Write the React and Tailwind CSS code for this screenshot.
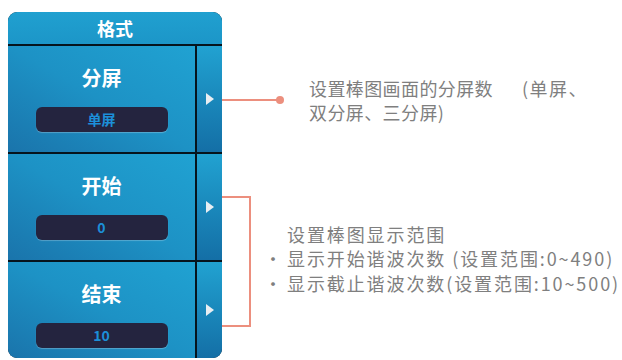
const font = { fontFamily: '"Noto Sans CJK SC", "Noto Sans", sans-serif' };

const Row = ({ title, value, className }) => (
  <div className={`grid grid-cols-[187px_25px] gap-x-[2px] ${className}`}>
    <div className="flex flex-col items-center bg-gradient-to-tr from-[#1a74ab] via-[#1d92c5] to-[#20a2d2]">
      <div className="mt-[19px] h-[26px] text-[20px] font-bold leading-[26px] text-white">{title}</div>
      <div className="mt-[16px] flex h-[25px] w-[132px] items-center justify-center rounded-[6px] bg-[#24243f] text-[14px] font-bold text-[#1c8fd8] shadow-[0_1px_1px_rgba(255,255,255,0.25)]">
        {value}
      </div>
    </div>
    <div className="flex items-center justify-center bg-gradient-to-b from-[#21a2d1] to-[#146fa6]">
      <div className="h-0 w-0 border-y-[6px] border-l-[8px] border-y-transparent border-l-[#e9eef2]" />
    </div>
  </div>
);

export default function App() {
  return (
    <div className="flex h-[360px] w-[622px] overflow-hidden bg-white" style={font}>
      <div className="ml-[8px] mt-[12px] flex h-[346px] w-[214px] shrink-0 flex-col gap-y-[2px] overflow-hidden rounded-[9px] bg-[#06141d]">
        <div className="flex h-[32px] shrink-0 items-center justify-center bg-gradient-to-b from-[#20a0d0] to-[#1c96c8] text-[18px] font-bold text-white">
          格式
        </div>
        <Row title="分屏" value="单屏" className="h-[106px] shrink-0" />
        <Row title="开始" value="0" className="h-[106px] shrink-0" />
        <Row title="结束" value="10" className="flex-1" />
      </div>

      <div className="flex flex-1 flex-col text-[#7f7f7f]">
        <div className="mt-[76px] flex h-[48px] items-center">
          <div className="h-[2px] w-[56px] bg-[#ec8f7e]" />
          <div className="-ml-[2px] h-[8px] w-[8px] rounded-full bg-[#ec8f7e]" />
          <div className="ml-[25px] whitespace-nowrap text-[18px] leading-[24px] tracking-[0.4px]">
            <div>
              设置棒图画面的分屏数<span className="ml-[29px] tracking-[1.5px]">(单屏、</span>
            </div>
            <div>双分屏、三分屏)</div>
          </div>
        </div>

        <div className="mt-[72px] flex items-center">
          <div className="h-[131px] w-[29px] border-2 border-l-0 border-[#ec8f7e]" />
          <div className="mb-[6px] ml-[13px] text-[18px] leading-[24.5px] tracking-[1.9px]">
            <div className="flex">
              <span className="w-[23px]" />
              <span>设置棒图显示范围</span>
            </div>
            <div className="flex whitespace-nowrap">
              <span className="w-[23px]">·</span>
              <span>
                显示开始谐波次数<span className="ml-[6px]">(设置范围:0~490)</span>
              </span>
            </div>
            <div className="flex whitespace-nowrap">
              <span className="w-[23px]">·</span>
              <span>显示截止谐波次数(设置范围:10~500)</span>
            </div>
          </div>
        </div>
      </div>
    </div>
  );
}
